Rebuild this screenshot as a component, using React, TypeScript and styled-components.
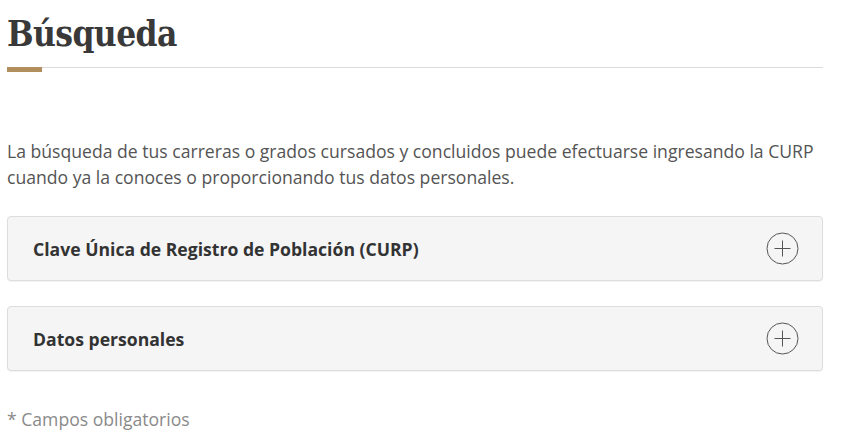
import React from "react";
import styled, { createGlobalStyle } from "styled-components";

const Global = createGlobalStyle`
  html, body { margin: 0; padding: 0; background: #fff; }
  body { font-family: "Open Sans", sans-serif; color: #404041; }
`;

const Page = styled.div`
  width: 816px;
  padding: 0 0 0 7px;
`;

const Title = styled.h1`
  margin: 0;
  padding-top: 14px;
  font-family: "DejaVu Serif", serif;
  font-stretch: condensed;
  font-weight: 700;
  font-size: 35px;
  line-height: 40px;
  color: #393939;
  letter-spacing: -0.6px;
`;

const Rule = styled.div`
  position: relative;
  margin-top: 13px;
  height: 1px;
  background: #dcdcdc;
`;

const RuleAccent = styled.span`
  position: absolute;
  left: 0;
  top: 0;
  width: 35px;
  height: 5px;
  background: #b38e5d;
`;

const Intro = styled.p`
  margin: 70px 0 0;
  font-size: 17.6px;
  line-height: 26px;
  color: #545454;
`;

const Panel = styled.div<{ $first?: boolean }>`
  margin-top: ${(p) => (p.$first ? "26px" : "25px")};
  height: 65px;
  box-sizing: border-box;
  background: #f5f5f5;
  border: 1px solid #dddddd;
  border-radius: 4px;
  box-shadow: 0 1px 1px rgba(0, 0, 0, 0.05);
  display: flex;
  align-items: center;
  justify-content: space-between;
  padding: 0 23px 0 25px;
`;

const PanelTitle = styled.span`
  font-size: 17.6px;
  font-weight: 700;
  color: #333;
`;

const Plus = () => (
  <svg width="33" height="33" viewBox="0 0 33 33" fill="none">
    <circle cx="16.5" cy="16.5" r="15.5" stroke="#555" strokeWidth="1" />
    <path d="M16.5 8.5V24.5M8.5 16.5H24.5" stroke="#555" strokeWidth="1" />
  </svg>
);

const Note = styled.p`
  margin: 35px 0 0;
  font-size: 17.6px;
  line-height: 26px;
  color: #8a8a8a;
`;

export default function App() {
  return (
    <>
      <Global />
      <Page>
        <Title>Búsqueda</Title>
        <Rule>
          <RuleAccent />
        </Rule>
        <Intro>
          La búsqueda de tus carreras o grados cursados y concluidos puede efectuarse ingresando la CURP cuando ya la conoces o proporcionando tus datos personales.
        </Intro>
        <Panel $first>
          <PanelTitle>Clave Única de Registro de Población (CURP)</PanelTitle>
          <Plus />
        </Panel>
        <Panel>
          <PanelTitle>Datos personales</PanelTitle>
          <Plus />
        </Panel>
        <Note>* Campos obligatorios</Note>
      </Page>
    </>
  );
}
